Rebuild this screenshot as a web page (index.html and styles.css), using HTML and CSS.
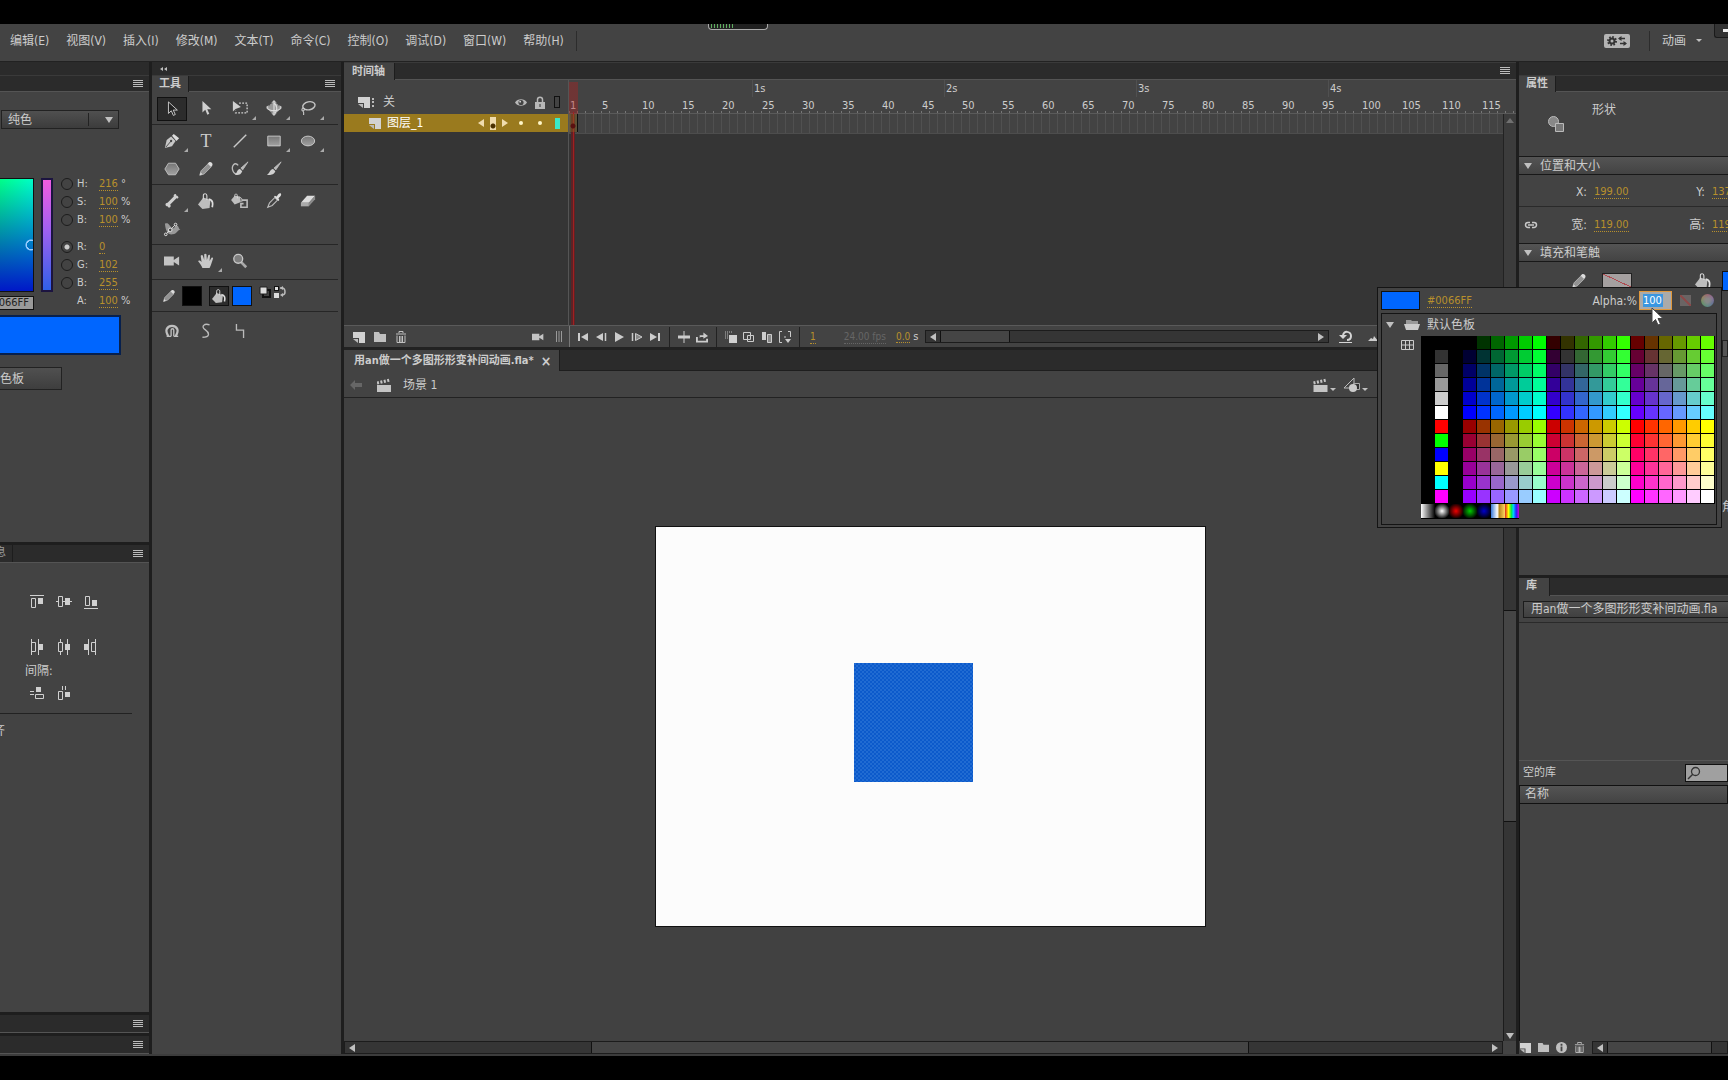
FILE: index.html
```html
<!DOCTYPE html>
<html lang="zh-CN">
<head>
<meta charset="utf-8">
<title>动画</title>
<link rel="stylesheet" href="styles.css">
</head>
<body>
<svg width="0" height="0" class="sprite" aria-hidden="true">
  <defs>
    <linearGradient id="g" x1="0" y1="0" x2="0" y2="1"><stop offset="0" stop-color="#767676"/><stop offset="1" stop-color="#a2a2a2"/></linearGradient>
  </defs>
  <symbol id="menu" viewBox="0 0 10 8"><path d="M0 .5h10M0 2.5h10M0 4.5h10M0 6.5h10" stroke="#bbb"/></symbol>
  <symbol id="select" viewBox="0 0 18 18"><path d="M5 1v13l3.200-3 2.300 5.200 2.200-1-2.300-5H15z" fill="#222" stroke="#d5d5d5"/></symbol>
  <symbol id="subselect" viewBox="0 0 18 18"><path d="M5 1v13l3.200-3 2.300 5.500 2.200-1-2.300-5H15z" fill="#cfcfcf"/></symbol>
  <symbol id="transform" viewBox="0 0 18 18"><path d="M1 1v12l3-3 6-2z" fill="#cfcfcf"/><path d="M8 3.500h9v11H4V12" fill="none" stroke="#cfcfcf" stroke-width="1.500" stroke-dasharray="2 1.500"/></symbol>
  <symbol id="rotate3d" viewBox="0 0 18 18"><circle cx="9" cy="9" r="6" fill="#999"/><path d="M9 1v15M1 9c3 4 13 4 16 0M9 3c4 3 4 9 1 12" fill="none" stroke="#ddd" stroke-width="1.300"/><path d="M9 0l3 3H6zM9 18l-3-3h6zM0 8l3-2v5zM18 8l-3-2v5z" fill="#ccc"/></symbol>
  <symbol id="lasso" viewBox="0 0 18 18"><ellipse cx="10" cy="6.500" rx="7" ry="4.500" fill="none" stroke="#c4c4c4" stroke-width="1.600" transform="rotate(-12 10 6.500)"/><path d="M4 9c-3 1-2 4 0 3s1-3-1-3M3 12c2 2 1 3 1 5" fill="none" stroke="#c4c4c4" stroke-width="1.300"/></symbol>
  <symbol id="pen" viewBox="0 0 18 18"><path d="M1 17l2-9 5-4 5 5-4 6z" fill="#c8c8c8"/><path d="M9 3l2-2 6 5-3 3z" fill="#ddd"/><path d="M2 16l6-7" stroke="#444"/><circle cx="8" cy="9" r="1.300" fill="#444"/></symbol>
  <symbol id="line" viewBox="0 0 18 18"><path d="M2 16L16 2" stroke="#c8c8c8" stroke-width="1.600"/></symbol>
  <symbol id="rect" viewBox="0 0 18 18"><path d="M2 3.500h14v11H2z" fill="url(#g)" stroke="#d0d0d0"/></symbol>
  <symbol id="oval" viewBox="0 0 18 18"><ellipse cx="9" cy="9" rx="7.500" ry="5.500" fill="url(#g)" stroke="#d0d0d0"/></symbol>
  <symbol id="poly" viewBox="0 0 18 18"><path d="M5 2.500h8l4 6.500-4 6.500H5L1 9z" fill="url(#g)" stroke="#c4c4c4"/></symbol>
  <symbol id="pencil" viewBox="0 0 18 18"><path d="M2 16l1.500-5 8-8 3.500 3.500-8 8z" fill="#929292" stroke="#b4b4b4"/><path d="M11 3c1-2 3-2.500 4.500-1s1 3.500-1 4.500z" fill="#ddd"/><path d="M2 16l1-3 2 2z" fill="#ddd"/></symbol>
  <symbol id="brush" viewBox="0 0 18 18"><path d="M17 1l-8 7 2 2z" fill="#bbb" stroke="#bbb"/><path d="M8 9l2.500 2.500C9 16 4 16 1 15.500c3-1 3-6 7-6.500z" fill="#d0d0d0"/></symbol>
  <symbol id="curvebrush" viewBox="0 0 20 18"><path d="M8 5c-4-5-8 1-6 6 1 3 3 4 5 3" fill="none" stroke="#bbb" stroke-width="1.500"/><path d="M19 1l-8 7 2 2z" fill="#bbb" stroke="#bbb"/><path d="M10 9l2.500 2.500C11 16 8 16 4 15.500c3-1 2-6 6-6.500z" fill="#d0d0d0"/></symbol>
  <symbol id="bone" viewBox="0 0 18 18"><path d="M11 4c-1-3 3-4 3-1 3 0 3 4 0 3L7 13c2 3-2 5-3 2-3 0-3-4 0-4z" fill="#cfcfcf"/></symbol>
  <symbol id="bucket" viewBox="0 0 18 18"><path d="M0 13l6-8 8 3-1 9-8 1z" fill="#bdbdbd"/><path d="M6 7V3c0-3 4-3 4 0v5" fill="none" stroke="#ddd" stroke-width="1.200"/><path d="M12 7c5 1 5 5 4 9" fill="none" stroke="#ddd" stroke-width="2"/></symbol>
  <symbol id="ink" viewBox="0 0 20 18"><path d="M0 8l4-5 6 1 1 6-7 3z" fill="#bdbdbd"/><path d="M4 4c0-4 3-4 3 0v2M10 5c3 1 2 3 2 5" fill="none" stroke="#ddd"/><path d="M12 8h6v8h-7v-4h3" fill="none" stroke="#bbb" stroke-width="1.800"/></symbol>
  <symbol id="dropper" viewBox="0 0 18 18"><path d="M2 16l2-5 6-6 3 3-6 6z" fill="none" stroke="#bbb" stroke-width="1.300"/><path d="M9 4l1-1 2 1 2-3c3-2 4 1 2 3l-2 2 1 2-1 1z" fill="#ddd"/></symbol>
  <symbol id="eraser" viewBox="0 0 18 18"><path d="M1 11l7-8h9l-7 8z" fill="#ddd"/><path d="M1 11h9v4H1z" fill="#aaa"/><path d="M10 11l7-8v4l-7 8z" fill="#8b8b8b"/></symbol>
  <symbol id="width" viewBox="0 0 20 18"><path d="M2 3c4-2 5 2 8 5 3 1 3-3 5-3 3 0 2 4 5 5-4-1-4 5-9 5-6 1-8-4-9-12z" fill="#999"/><path d="M3 15L14 4" stroke="#eee"/><circle cx="3" cy="15" r="1.500" fill="#444" stroke="#eee"/><circle cx="8" cy="10" r="2" fill="#444" stroke="#eee"/><circle cx="14" cy="4" r="1.500" fill="#444" stroke="#eee"/></symbol>
  <symbol id="camera" viewBox="0 0 18 18"><path d="M0 4h11v10H0zM11 8l6-4v10l-6-4z" fill="#c4c4c4"/></symbol>
  <symbol id="hand" viewBox="0 0 18 18"><path d="M5 17C4 14 2 12 0 9c1-1 2-1 4 1L3 3c1-1 2-1 2.500 0L7 8V1.500C7.500.500 9 .500 9.500 1.500L10 8l1.500-5.500c.5-1 2-.8 2 .5L13 9l2-3.500c1-1 2-.5 2 .5-1 3-2 7-4 11z" fill="#c8c8c8"/></symbol>
  <symbol id="zoom" viewBox="0 0 18 18"><path d="M10 10l6 6" stroke="#aaa" stroke-width="3"/><circle cx="7" cy="6.500" r="5" fill="#7e7e7e" stroke="#c8c8c8" stroke-width="1.500"/></symbol>
  <symbol id="magnet" viewBox="0 0 18 18"><path d="M5 15c-2-3-3-5-2-8 2-5 10-5 12 0 1 3 0 5-2 8" fill="none" stroke="#c0c0c0" stroke-width="2.500"/><path d="M8 15V8c0-2 3-2 3 0v7M3 15h5M11 15h5" fill="none" stroke="#c0c0c0" stroke-width="1.500"/></symbol>
  <symbol id="smooth" viewBox="0 0 18 18"><path d="M13 2C7 0 3 4 8 7.500S14 16 5 16" fill="none" stroke="#bbb" stroke-width="1.500"/></symbol>
  <symbol id="straight" viewBox="0 0 18 18"><path d="M5 1v7h8v9" fill="none" stroke="#bbb" stroke-width="1.500"/></symbol>
  <symbol id="bw" viewBox="0 0 12 12"><path d="M4 4h7v7H4z" fill="none" stroke="#111" stroke-width="2"/><path d="M1 1h7v7H1z" fill="#ddd" stroke="#222"/></symbol>
  <symbol id="swap" viewBox="0 0 12 12"><path d="M0 0h5v5H0z" fill="#111"/><path d="M1 1h3v3H1zM0 7h5v5H0z" fill="#ddd"/><path d="M6 2h2c3 0 3 2 3 4s-1 3-3 3" fill="none" stroke="#bbb" stroke-width="1.500"/><path d="M6 2l3-2v4zM6 9l3-2v4z" fill="#bbb"/></symbol>
  <symbol id="layer" viewBox="0 0 12 12"><path d="M0 1h12v11H6V7H0z" fill="#d2d2d2"/><path d="M0 8h5v4z" fill="#bbb"/></symbol>
  <symbol id="eye" viewBox="0 0 14 10"><path d="M0 5c3-5 11-5 14 0-3 5-11 5-14 0z" fill="#b8b8b8"/><circle cx="7" cy="5" r="3" fill="#444"/><circle cx="6" cy="4" r="1" fill="#ddd"/></symbol>
  <symbol id="lock" viewBox="0 0 10 13"><path d="M2.500 6V3.500c0-3 5-3 5 0V6" fill="none" stroke="#b8b8b8" stroke-width="1.500"/><path d="M0 6h10v7H0z" fill="#b8b8b8"/><path d="M4.500 8h1v3h-1z" fill="#333"/></symbol>
  <symbol id="folder" viewBox="0 0 12 12"><path d="M0 1h5l1 2h6v8H0z" fill="#c0c0c0"/></symbol>
  <symbol id="trash" viewBox="0 0 12 12"><path d="M1 3h10M4 2V.5h4V2M2 4.500v7h8v-7M4.500 5v6M6 5v6M7.500 5v6" fill="none" stroke="#c0c0c0"/></symbol>
  <symbol id="grip" viewBox="0 0 6 12"><path d="M.5 0v11M3 0v11M5.500 0v11" stroke="#999"/></symbol>
  <symbol id="first" viewBox="0 0 12 10"><path d="M2 1v8" stroke="#ccc" stroke-width="2"/><path d="M11 1v8L4 5z" fill="#ccc"/></symbol>
  <symbol id="prev" viewBox="0 0 12 10"><path d="M10.500 1v8" stroke="#ccc" stroke-width="1.500"/><path d="M8 1v8L1 5z" fill="#ccc"/></symbol>
  <symbol id="play" viewBox="0 0 12 10"><path d="M2 0v10l9-5z" fill="#ccc"/></symbol>
  <symbol id="next" viewBox="0 0 12 10"><path d="M1.500 1v8" stroke="#ccc" stroke-width="1.500"/><path d="M4.500 1.500v7L11 5z" fill="#888" stroke="#ccc"/></symbol>
  <symbol id="last" viewBox="0 0 12 10"><path d="M10 1v8" stroke="#ccc" stroke-width="2"/><path d="M1 1v8l7-4z" fill="#ccc"/></symbol>
  <symbol id="center" viewBox="0 0 12 12"><path d="M6 0v12" stroke="#ccc"/><path d="M0 6h12" stroke="#ccc" stroke-width="3"/></symbol>
  <symbol id="loop" viewBox="0 0 13 12"><path d="M1 6v5h11V8" fill="none" stroke="#ccc" stroke-width="2"/><path d="M4 7V4h4V1l5 4-5 3V6H5z" fill="#ccc"/></symbol>
  <symbol id="onion" viewBox="0 0 12 12"><path d="M4 4h8v8H4z" fill="#d0d0d0"/><path d="M0 1h8M0 3h4M0 5h4M0 7h3" stroke="#bbb" stroke-dasharray="1 1"/></symbol>
  <symbol id="outline" viewBox="0 0 12 12"><path d="M.5 1.500h7v7h-7zM4.500 4.500h6v6h-6z" fill="none" stroke="#ccc"/></symbol>
  <symbol id="multi" viewBox="0 0 12 12"><path d="M1 1h4v8H1z" fill="#ccc"/><path d="M6.500 3.500h4v8h-4z" fill="#888" stroke="#ccc"/></symbol>
  <symbol id="marker" viewBox="0 0 12 12"><path d="M3 .5H.5v11H3M9 .5h2.500V6M5 6h2" fill="none" stroke="#ccc"/><path d="M6 8h6l-3 4z" fill="#ccc"/></symbol>
  <symbol id="undo" viewBox="0 0 14 13"><path d="M4 6c0-6 8-5 8 0 0 2-1 4-4 4" fill="none" stroke="#d5d5d5" stroke-width="2"/><path d="M0 5h8L4 9z" fill="#d5d5d5"/><path d="M0 12.500h13" stroke="#d5d5d5"/></symbol>
  <symbol id="hills" viewBox="0 0 10 5"><path d="M0 5l3-3 2 1 1-3 4 5z" fill="#ccc"/></symbol>
  <symbol id="clap" viewBox="0 0 14 14"><path d="M0 7h14v7H0z" fill="#c4c4c4"/><path d="M0 5l13-3" stroke="#c4c4c4" stroke-width="3" stroke-dasharray="2 1.500"/></symbol>
  <symbol id="symbols" viewBox="0 0 16 14"><path d="M0 10L10 0v10z" fill="#444" stroke="#bbb"/><path d="M9.500 5.500h6v6h-6z" fill="#333" stroke="#aaa"/><circle cx="9" cy="10" r="4" fill="#ccc"/></symbol>
  <symbol id="back" viewBox="0 0 12 10"><path d="M0 5l5-5v3h7v4H5v3z" fill="#666"/></symbol>
  <symbol id="shapes" viewBox="0 0 16 16"><circle cx="5.500" cy="5.500" r="5" fill="#888" stroke="#bbb"/><path d="M7.500 7.500h8v8h-8z" fill="#777" stroke="#bbb"/></symbol>
  <symbol id="link" viewBox="0 0 14 8"><path d="M6 1.500H4a2.500 2.500 0 000 5h2M8 1.500h2a2.500 2.500 0 010 5H8M4 4h6" fill="none" stroke="#c8c8c8" stroke-width="1.500"/></symbol>
  <symbol id="info" viewBox="0 0 12 12"><circle cx="6" cy="6" r="6" fill="#c0c0c0"/><path d="M6 2v2M6 5v5" stroke="#444" stroke-width="2"/></symbol>
  <symbol id="search" viewBox="0 0 14 14"><path d="M1 13l5-5" stroke="#333" stroke-width="1.500"/><circle cx="8.500" cy="5.500" r="4" fill="none" stroke="#333" stroke-width="1.300"/></symbol>
  <symbol id="openfolder" viewBox="0 0 16 12"><path d="M2 5V1h5l1 1h6v3" fill="#999"/><path d="M0 5h16l-2 6H2z" fill="#ccc"/></symbol>
  <symbol id="grid" viewBox="0 0 13 10"><path d="M.5.5h12v9H.5zM.5 5h12M4.500.5v9M8.500.5v9" fill="none" stroke="#ccc"/></symbol>
  <symbol id="a1" viewBox="0 0 16 16"><path d="M1 1.500h14" stroke="#d0d0d0"/><path d="M2.500 4.500h4v9h-4z" fill="none" stroke="#d0d0d0"/><path d="M9 4h5v6H9z" fill="#d0d0d0"/></symbol>
  <symbol id="a2" viewBox="0 0 16 16"><path d="M0 7.500h16" stroke="#d0d0d0"/><path d="M2.500 2.500h4v10h-4z" fill="#444" stroke="#d0d0d0"/><path d="M9 4h5v7H9z" fill="#d0d0d0"/></symbol>
  <symbol id="a3" viewBox="0 0 16 16"><path d="M1 14.500h14" stroke="#d0d0d0"/><path d="M2.500 2.500h4v9h-4z" fill="none" stroke="#d0d0d0"/><path d="M9 6h5v6H9z" fill="#d0d0d0"/></symbol>
  <symbol id="b1" viewBox="0 0 16 16"><path d="M2.500 0v16M9.500 0v16M3 3.500h3.500v9H3" fill="none" stroke="#d0d0d0"/><path d="M9 5h5v6H9z" fill="#d0d0d0"/></symbol>
  <symbol id="b2" viewBox="0 0 16 16"><path d="M4.500 0v16M11.500 0v16" stroke="#d0d0d0"/><path d="M2.500 3.500h4v9h-4z" fill="#444" stroke="#d0d0d0"/><path d="M9 5h5v6H9z" fill="#d0d0d0"/></symbol>
  <symbol id="b3" viewBox="0 0 16 16"><path d="M5.500 0v16M12.500 0v16M12 3.500H8.500v9H12" fill="none" stroke="#d0d0d0"/><path d="M1 5h5v6H1z" fill="#d0d0d0"/></symbol>
  <symbol id="c1" viewBox="0 0 16 16"><path d="M1 6.500h4M1 9.500h4M6.500 9.500h8v4h-8z" fill="none" stroke="#d0d0d0"/><path d="M7 2h5v5H7z" fill="#d0d0d0"/></symbol>
  <symbol id="c2" viewBox="0 0 16 16"><path d="M6.500 1v4M9.500 1v4M2.500 6.500h4v8h-4z" fill="none" stroke="#d0d0d0"/><path d="M9 7h5v5H9z" fill="#d0d0d0"/></symbol>
  <symbol id="gear" viewBox="0 0 26 14"><rect width="26" height="14" rx="2" fill="#b4b4b4"/><circle cx="8" cy="7" r="4" fill="none" stroke="#333" stroke-width="2" stroke-dasharray="1.600 1.500"/><circle cx="8" cy="7" r="2.500" fill="none" stroke="#333" stroke-width="2"/><path d="M15 4.500h6M16 9.500h6" stroke="#333" stroke-width="1.500"/><path d="M14 4.500L17.500 2v5zM23 9.500L19.500 7v5z" fill="#333"/></symbol>
  <symbol id="cursor" viewBox="0 0 13 20"><path d="M1 1v15l3.500-3.500L7 18l2.500-1-2.500-5.500h5z" fill="#fff" stroke="#444"/></symbol>
</svg>

<header class="menubar">
  <nav class="menus">
    <button>编辑(E)</button><button>视图(V)</button><button>插入(I)</button><button>修改(M)</button><button>文本(T)</button><button>命令(C)</button><button>控制(O)</button><button>调试(D)</button><button>窗口(W)</button><button>帮助(H)</button>
  </nav>
  <div class="battery"></div>
  <button class="sync" aria-label="同步设置"><svg width="26" height="14"><use href="#gear"/></svg></button>
  <button class="workspace">动画 <i class="tri down small"></i></button>
  <button class="minimize" aria-label="最小化"></button>
</header>

<main class="app">
  <aside class="mixer">
    <div class="strip"></div>
    <div class="tabbar"><svg class="more" width="10" height="8"><use href="#menu"/></svg></div>
    <section class="color">
      <button class="combo">纯色<i class="tri down"></i></button>
      <div class="picker">
        <div class="field-col">
          <div class="spectrum"></div>
          <input class="hex" aria-label="十六进制" value="0066FF">
        </div>
        <div class="hue"></div>
        <div class="values">
          <label><input type="radio" name="ch">H:</label><span><a href="#">216</a> °</span>
          <label><input type="radio" name="ch">S:</label><span><a href="#">100</a> %</span>
          <label><input type="radio" name="ch">B:</label><span><a href="#">100</a> %</span>
          <hr>
          <label><input type="radio" name="ch" checked>R:</label><span><a href="#">0</a></span>
          <label><input type="radio" name="ch">G:</label><span><a href="#">102</a></span>
          <label><input type="radio" name="ch">B:</label><span><a href="#">255</a></span>
          <label class="alpha">A:</label><span><a href="#">100</a> %</span>
        </div>
      </div>
      <div class="preview"></div>
      <button class="add">色板</button>
    </section>
    <div class="tabbar gap"><span class="cut">息</span><svg class="more" width="10" height="8"><use href="#menu"/></svg></div>
    <section class="align">
      <div class="icons"><svg><use href="#a1"/></svg><svg><use href="#a2"/></svg><svg><use href="#a3"/></svg></div>
      <div class="icons second"><svg><use href="#b1"/></svg><svg><use href="#b2"/></svg><svg><use href="#b3"/></svg></div>
      <p>间隔:</p>
      <div class="icons"><svg><use href="#c1"/></svg><svg><use href="#c2"/></svg></div>
      <hr>
      <span class="tail">齐</span>
    </section>
    <div class="tabbar gap"><svg class="more" width="10" height="8"><use href="#menu"/></svg></div>
    <div class="tabbar gap"><svg class="more" width="10" height="8"><use href="#menu"/></svg></div>
  </aside>

  <aside class="tools">
    <div class="strip"><span class="collapse"><i class="tri left tiny"></i><i class="tri left tiny"></i></span></div>
    <div class="tabbar"><b class="tab">工具</b><svg class="more" width="10" height="8"><use href="#menu"/></svg></div>
    <div class="group">
      <button class="on" aria-label="选择"><svg><use href="#select"/></svg></button><button aria-label="部分选取"><svg><use href="#subselect"/></svg></button><button class="sub" aria-label="任意变形"><svg><use href="#transform"/></svg></button><button class="sub" aria-label="3D 旋转"><svg><use href="#rotate3d"/></svg></button><button class="sub" aria-label="套索"><svg><use href="#lasso"/></svg></button>
    </div>
    <div class="group">
      <button class="sub" aria-label="钢笔"><svg><use href="#pen"/></svg></button><button class="type">T</button><button aria-label="线条"><svg><use href="#line"/></svg></button><button class="sub" aria-label="矩形"><svg><use href="#rect"/></svg></button><button class="sub" aria-label="椭圆"><svg><use href="#oval"/></svg></button>
      <button aria-label="多角星形"><svg><use href="#poly"/></svg></button><button aria-label="铅笔"><svg><use href="#pencil"/></svg></button><button aria-label="艺术画笔"><svg><use href="#curvebrush"/></svg></button><button aria-label="画笔"><svg><use href="#brush"/></svg></button>
    </div>
    <div class="group">
      <button class="sub" aria-label="骨骼"><svg><use href="#bone"/></svg></button><button aria-label="颜料桶"><svg><use href="#bucket"/></svg></button><button aria-label="墨水瓶"><svg><use href="#ink"/></svg></button><button aria-label="滴管"><svg><use href="#dropper"/></svg></button><button aria-label="橡皮擦"><svg><use href="#eraser"/></svg></button>
      <button aria-label="宽度"><svg><use href="#width"/></svg></button>
    </div>
    <div class="group view">
      <button aria-label="摄像头"><svg><use href="#camera"/></svg></button><button class="sub" aria-label="手形"><svg><use href="#hand"/></svg></button><button aria-label="缩放"><svg><use href="#zoom"/></svg></button>
    </div>
    <div class="paints">
      <svg width="14" height="14"><use href="#pencil"/></svg>
      <button class="chip black" aria-label="笔触"></button>
      <button class="chip fillmode" aria-label="填充工具"><svg width="14" height="14"><use href="#bucket"/></svg></button>
      <button class="chip blue" aria-label="填充"></button>
      <svg width="12" height="12"><use href="#bw"/></svg>
      <svg width="12" height="12"><use href="#swap"/></svg>
    </div>
    <div class="group last">
      <button aria-label="贴紧"><svg><use href="#magnet"/></svg></button><button aria-label="平滑"><svg><use href="#smooth"/></svg></button><button aria-label="伸直"><svg><use href="#straight"/></svg></button>
    </div>
  </aside>

  <section class="center">
    <div class="tabbar time-tabs"><b class="tab">时间轴</b><svg class="more" width="10" height="8"><use href="#menu"/></svg></div>
    <div class="timeline">
      <div class="layers">
        <div class="layer-head">
          <svg width="12" height="12"><use href="#layer"/></svg><i class="dots"></i><span>关</span>
          <div class="cells"><i class="c19"><svg width="12" height="9"><use href="#eye"/></svg></i><i class="c19"><svg width="10" height="13"><use href="#lock"/></svg></i><i class="c16"><i class="box"></i></i></div>
        </div>
        <div class="layer">
          <svg width="12" height="12"><use href="#layer"/></svg><span>图层_1</span>
          <div class="cells"><i class="c12"><i class="tri left"></i></i><i class="c12"><i class="key"></i></i><i class="c12"><i class="tri right"></i></i><i class="c19"><i class="dot"></i></i><i class="c19"><i class="dot"></i></i><i class="c16"><i class="teal"></i></i></div>
        </div>
      </div>
      <div class="frames">
        <div class="ruler"><div class="seconds" id="seconds"></div><div class="numbers" id="numbers"></div></div>
        <div class="row"></div>
        <div class="playhead"></div>
        <div class="tscroll"><i class="tri up dim"></i></div>
      </div>
    </div>
    <div class="controls">
      <div class="layer-tools"><button><svg><use href="#layer"/></svg></button><button><svg><use href="#folder"/></svg></button><button><svg><use href="#trash"/></svg></button><button class="push"><svg><use href="#camera"/></svg></button><button><svg><use href="#grip"/></svg></button></div>
      <div class="set"><button><svg><use href="#first"/></svg></button><button><svg><use href="#prev"/></svg></button><button><svg><use href="#play"/></svg></button><button><svg><use href="#next"/></svg></button><button><svg><use href="#last"/></svg></button></div>
      <div class="set"><button><svg><use href="#center"/></svg></button><button><svg><use href="#loop"/></svg></button></div>
      <div class="set"><button><svg><use href="#onion"/></svg></button><button><svg><use href="#outline"/></svg></button><button><svg><use href="#multi"/></svg></button><button><svg><use href="#marker"/></svg></button></div>
      <div class="stats"><a href="#">1</a><a href="#" class="fps">24.00 fps</a><span><a href="#">0.0</a> s</span></div>
      <div class="hbar"><i class="tri left"></i><div class="thumb"></div><i class="tri right"></i></div>
      <svg class="undo" width="14" height="13"><use href="#undo"/></svg>
      <svg class="hills" width="10" height="5"><use href="#hills"/></svg>
    </div>
    <div class="doc-tabs"><div class="doc"><b>用an做一个多图形形变补间动画.fla*</b><button aria-label="关闭">×</button></div></div>
    <div class="scene">
      <svg width="12" height="10"><use href="#back"/></svg><svg width="14" height="14"><use href="#clap"/></svg><span>场景 1</span>
      <div class="scene-tools"><svg width="15" height="14"><use href="#clap"/></svg><i class="tri down small"></i><svg width="16" height="14"><use href="#symbols"/></svg><i class="tri down small"></i></div>
    </div>
    <div class="work">
      <div class="pasteboard"><div class="stage"><div class="shape"></div></div></div>
      <div class="vbar"><div class="thumb"></div><i class="tri down"></i></div>
    </div>
    <div class="bottombar"><div class="hbar wide"><i class="tri left"></i><div class="thumb"></div><i class="tri right"></i></div><div class="corner"></div></div>
  </section>

  <aside class="props">
    <div class="strip"></div>
    <div class="tabbar"><b class="tab">属性</b></div>
    <div class="kind"><svg width="16" height="16"><use href="#shapes"/></svg><span>形状</span></div>
    <h2><i class="tri down"></i>位置和大小</h2>
    <div class="pair"><span></span><label>X:</label><a href="#">199.00</a><label>Y:</label><a href="#">137.00</a></div>
    <div class="pair size"><svg width="14" height="8"><use href="#link"/></svg><label>宽:</label><a href="#">119.00</a><label>高:</label><a href="#">119.00</a></div>
    <h2><i class="tri down"></i>填充和笔触</h2>
    <div class="fillrow"><svg width="16" height="16"><use href="#pencil"/></svg><i class="none"></i><svg width="16" height="16"><use href="#bucket"/></svg><i class="chip blue"></i></div>
    <div class="rest"><i class="sliver"></i><span>角</span></div>
    <div class="tabbar gap lib"><b class="tab">库</b></div>
    <div class="libselect"><button>用an做一个多图形形变补间动画.fla</button></div>
    <div class="libpreview"></div>
    <div class="libsearch"><span>空的库</span><label><svg width="14" height="14"><use href="#search"/></svg><input aria-label="搜索"></label></div>
    <div class="libhead">名称</div>
    <div class="liblist"></div>
    <div class="libfoot"><svg><use href="#layer"/></svg><svg><use href="#folder"/></svg><svg><use href="#info"/></svg><svg><use href="#trash"/></svg><div class="hbar"><i class="tri left"></i><div class="thumb"></div></div></div>
  </aside>
</main>

<div class="popup">
  <div class="popup-head"><i class="chip blue"></i><a href="#">#0066FF</a><label for="alpha">Alpha:%</label><div class="alphabox"><input id="alpha" value="100"></div><i class="nocolor"></i><i class="wheel"></i></div>
  <div class="popup-body">
    <div class="set-name"><i class="tri down"></i><svg width="16" height="12"><use href="#openfolder"/></svg><span>默认色板</span></div>
    <div class="set-body">
      <svg width="13" height="10"><use href="#grid"/></svg>
      <div><div class="swatches" id="swatches"></div><div class="gradients"><i></i><i></i><i></i><i></i><i></i><i></i><i></i></div></div>
    </div>
  </div>
  <svg class="cursor" width="13" height="20"><use href="#cursor"/></svg>
</div>
<div class="floor"></div>
<script src="app.js"></script>
</body>
</html>
```
FILE: styles.css
```css
* { box-sizing: border-box; }
body {
  margin: 0; padding-top: 24px; min-height: 100vh; background: #000; color: #ccc;
  display: flex; flex-direction: column; position: relative; overflow: hidden;
  font: 12px/16px "DejaVu Sans Condensed", "Noto Sans CJK SC", sans-serif;
}
.sprite { position: absolute; }
button, input { font: inherit; color: inherit; background: none; border: 0; padding: 0; margin: 0; }
a { color: #b8902c; text-decoration: none; border-bottom: 1px dotted #b8902c; font-size: 11px; line-height: 13px; }
svg { flex: none; display: block; }
h2, p { margin: 0; font-size: inherit; font-weight: 400; }
hr { margin: 0; border: 0; }

.tri { width: 0; height: 0; border: 4px solid transparent; flex: none; display: inline-block; }
.tri.down { border-top: 6px solid #c0c0c0; border-bottom: 0; }
.tri.up { border-bottom: 5px solid #c0c0c0; border-top: 0; }
.tri.left { border-right: 6px solid #c0c0c0; border-left: 0; }
.tri.right { border-left: 6px solid #c0c0c0; border-right: 0; }
.tri.small { border-width: 3px 3px 0; }
.tri.tiny { border-width: 2px 3px 2px 0; }
.tri.dim { border-bottom-color: #707070; }

.menubar { height: 38px; flex: none; background: #434343; display: flex; align-items: center; border-bottom: 1px solid #222; position: relative; padding-bottom: 4px; }
.menus { display: flex; gap: 17px; padding-left: 10px; padding-right: 12px; height: 20px; border-right: 1px solid #2c2c2c; }
.menus button { line-height: 20px; white-space: nowrap; }
.battery { position: absolute; left: 41%; top: 0; width: 60px; height: 6px; border: 1px solid #aaa; border-top: 0; border-radius: 0 0 4px 4px; background: repeating-linear-gradient(90deg, #5fae5f 0 1px, #202020 1px 3px) 2px 0 / 22px 4px no-repeat #202020; }
.sync { margin-left: auto; }
.workspace { margin-left: 19px; padding-left: 12px; height: 20px; border-left: 1px solid #2c2c2c; display: flex; align-items: center; gap: 10px; }
.minimize { align-self: flex-start; width: 14px; height: 14px; margin-left: 12px; background: #333; border: 1px solid #1a1a1a; border-top: 0; border-right: 0; border-radius: 0 0 0 3px; }
.minimize::after { content: ""; display: block; height: 3px; margin-left: 8px; background: #eee; }

.app { flex: 1; display: flex; background: #1e1e1e; min-height: 0; gap: 3px; border-bottom: 2px solid #3c3c3c; }
.app > * { background: #434343; display: flex; flex-direction: column; min-width: 0; overflow: hidden; }
.strip { height: 13px; flex: none; background: #2b2b2b; }
.tabbar { height: 17px; flex: none; display: flex; align-items: stretch; background: #2b2b2b; border-top: 1px solid #3a3a3a; border-bottom: 1px solid #545454; font-size: 11px; }
.tabbar.gap { height: 21px; border-top: 3px solid #1e1e1e; }
.tab { background: #434343; padding: 0 8px; line-height: 16px; margin-bottom: -1px; border-right: 1px solid #1d1d1d; }
.more { margin: auto 6px auto auto; }

.mixer { width: 149px; flex: none; }
.color { height: 450px; flex: none; padding-top: 18px; }
.combo { width: 118px; height: 19px; margin-left: 1px; padding: 0 5px 0 6px; border: 1px solid #222; background: linear-gradient(#222, #222) 86px 2px / 1px 13px no-repeat, linear-gradient(#505050, #3c3c3c); display: flex; align-items: center; justify-content: space-between; }
.picker { display: flex; margin-top: 46px; }
.field-col { width: 34px; padding-top: 3px; display: flex; flex-direction: column; gap: 4px; }
.spectrum { height: 114px; border: 1px solid #111; border-left: 0; background: radial-gradient(circle at 31px 66px, transparent 4px, #9cf 4px 5px, transparent 6px), linear-gradient(transparent, #0018c8), linear-gradient(90deg, #0f8, #00ffc8); }
.hex { height: 14px; width: 46px; margin-left: -12px; border: 1px solid #111; border-left: 0; background: #9a9a9a; color: #222; font-size: 11px; text-align: right; padding-right: 4px; }
.hue { margin: 3px 8px 0 7px; width: 12px; height: 114px; border: 2px solid #1c1440; background: linear-gradient(#f05ce0, #a060f0 45%, #3060e8); }
.values { display: grid; grid-template: 18px 18px 18px 9px / 38px auto; grid-auto-rows: 18px; align-items: center; font-size: 11px; }
.values hr { grid-column: 1 / 3; }
.values label { display: flex; align-items: center; gap: 4px; }
.values .alpha { padding-left: 16px; }
.values input { appearance: none; width: 12px; height: 12px; border: 1px solid #1c1c1c; border-radius: 50%; }
.values input:checked { background: radial-gradient(circle, #ccc 2px, transparent 3px); }
.preview { width: 121px; height: 40px; margin-top: 5px; border: 2px solid #07204d; border-left: 0; background: #0066ff; }
.add { width: 62px; height: 23px; margin-top: 12px; border: 1px solid #222; border-left: 0; background: linear-gradient(#505050, #3e3e3e); text-align: left; }
.cut { width: 13px; border-right: 1px solid #1d1d1d; overflow: hidden; display: flex; justify-content: flex-end; padding-right: 6px; color: #999; }
.align { flex: 1; padding: 31px 17px 0 0; }
.icons { display: flex; gap: 11px; padding-left: 29px; }
.icons svg { width: 16px; height: 16px; }
.icons.second { margin: 29px 0 7px; }
.align p { padding-left: 25px; line-height: 18px; margin-bottom: 5px; }
.align hr { border-top: 1px solid #222; margin: 12px 0 9px; }
.tail { display: flex; width: 5px; justify-content: flex-end; overflow: hidden; }

.tools { width: 189px; flex: none; }
.tools .tab { padding: 0 7px; }
.collapse { display: flex; gap: 1px; padding: 5px 0 0 8px; }
.group { display: flex; flex-wrap: wrap; align-content: center; padding: 1px 13px 1px 3px; margin: 0 3px 0 0; border-bottom: 1px solid #262626; }
.group button { width: 34px; height: 30px; display: flex; align-items: center; justify-content: center; position: relative; }
.group svg { width: 18px; height: 16px; }
.group button.on { width: 30px; height: 24px; margin: 4px 2px 2px; background: #2c2c2c; border: 1px solid #111; }
.group button.sub::after { content: ""; position: absolute; right: 1px; bottom: 3px; border: 4px solid transparent; border-width: 0 0 4px 4px; border-bottom-color: #aaa; }
.group + .group button { height: 28px; }
.group + .group { padding-top: 2px; }
.group .type { font: 18px/20px "Liberation Serif", serif; }
.group.view { padding-bottom: 4px; }
.paints { height: 32px; flex: none; display: flex; align-items: center; padding-left: 10px; margin-right: 3px; border-bottom: 1px solid #262626; }
.chip { width: 20px; height: 20px; border: 1px solid #111; display: flex; align-items: center; justify-content: center; }
.black { background: #000; margin: 0 7px 0 6px; }
.fillmode { background: #2c2c2c; margin-right: 3px; }
.blue { background: #0066ff; }
.paints .blue { margin-right: 7px; }
.paints .chip ~ svg { margin: -8px 3px 0 0; }
.group.last { border: 0; padding-top: 4px; }

.center { flex: 1; }
.time-tabs { height: 18px; }
.time-tabs .tab { line-height: 18px; padding: 0 9px 0 8px; }
.timeline { height: 245px; flex: none; display: flex; background: #353535; }
.layers { width: 225px; flex: none; border-right: 1px solid #555; }
.layer-head, .layer { display: flex; align-items: center; padding: 0 3px 0 14px; font-style: normal; }
.layer-head { height: 34px; background: #434343; padding-top: 10px; }
.dots { height: 9px; border-left: 2px dotted #bbb; margin: 0 9px 0 2px; }
.layer { height: 18px; background: #9a7a1e; color: #fff; padding-left: 25px; }
.layer span { margin-left: 6px; }
.cells { margin-left: auto; display: flex; align-items: center; }
.cells > i { display: flex; align-items: center; justify-content: center; }
.c12 { width: 12px; }
.c19 { width: 19px; }
.c16 { width: 16px; }
.cells .tri.left { border-right-color: #f0dcae; }
.cells .tri.right { border-left-color: #f0dcae; }
.box { width: 6px; height: 12px; border: 1px solid #111; }
.key { width: 6px; height: 13px; background: radial-gradient(circle at 3px 9px, #4a3000 2px, transparent 3px), #f0dcae; }
.dot { width: 4px; height: 4px; border-radius: 50%; background: #fff6c8; }
.teal { width: 5px; height: 11px; background: #3ae8c8; }
.frames { flex: 1; position: relative; overflow: hidden; min-width: 0; }
.ruler { height: 34px; background: repeating-linear-gradient(90deg, #777 0 1px, transparent 1px 8px) 0 31px / 100% 3px no-repeat #434343; border-bottom: 1px solid #5a5a5a; overflow: hidden; font-size: 11px; }
.seconds { display: flex; padding-left: 183px; height: 17px; line-height: 18px; }
.seconds span { width: 192px; flex: none; padding-left: 1px; border-left: 1px solid #505050; }
.numbers { display: flex; line-height: 17px; }
.numbers span { width: 40px; flex: none; }
.numbers span:first-child { width: 33px; padding-left: 1px; }
.row { height: 20px; margin-right: 13px; background: repeating-linear-gradient(90deg, #505050 0 1px, #434343 1px 8px); border-bottom: 1px solid #4d4d4d; }
.playhead { position: absolute; left: 0; top: 2px; width: 9px; bottom: 0; background: linear-gradient(#a02020, #a02020) 4px 30px / 1px 100% no-repeat, linear-gradient(#b0202066, #b0202066) 0 0 / 9px 32px no-repeat, linear-gradient(#5c2226, #5c2226) 2px 32px / 4px 100% no-repeat; }
.playhead::after { content: ""; position: absolute; left: 0; top: 32px; width: 8px; height: 18px; border-right: 1px solid #111; background: radial-gradient(circle at 4px 12px, #5a1010 2px, transparent 3px), #8a682266; }
.tscroll { position: absolute; right: 0; top: 34px; bottom: 0; width: 13px; background: #3c3c3c; border-left: 1px solid #222; display: flex; justify-content: center; padding-top: 4px; }

.controls { height: 25px; flex: none; display: flex; align-items: center; border-top: 1px solid #5a5a5a; border-bottom: 3px solid #222; }
.controls button { width: 18px; height: 20px; display: flex; align-items: center; justify-content: center; }
.controls button svg { width: 12px; height: 12px; }
.layer-tools { width: 226px; flex: none; align-self: stretch; display: flex; align-items: center; gap: 3px; padding: 0 1px 0 6px; border-right: 1px solid #777; }
.push { margin-left: auto; }
.set { display: flex; padding: 0 5px 0 4px; border-right: 1px solid #222; height: 20px; }
.set + .set { padding-left: 5px; }
.stats { display: flex; align-items: center; flex: none; width: 125px; padding-left: 10px; font-size: 11px; }
.stats a { font-size: 10px; white-space: nowrap; }
.stats span { white-space: nowrap; }
.stats .fps { color: #666; border-color: #666; margin: 0 10px 0 28px; }
.hbar { height: 13px; flex: 0 1 404px; border: 1px solid #1c1c1c; background: #353535; display: flex; align-items: center; padding: 0 4px; }
.hbar .thumb { width: 70px; align-self: stretch; background: #454545; border: 1px solid #111; border-width: 0 1px; margin: 0 auto 0 4px; }
.undo { margin: 0 15px 0 10px; }
.hills { margin-top: 4px; }

.doc-tabs { height: 21px; flex: none; display: flex; background: #2b2b2b; border-bottom: 1px solid #1e1e1e; }
.doc { background: #434343; display: flex; align-items: center; gap: 7px; padding: 1px 8px 0 10px; border-right: 1px solid #1d1d1d; font-size: 11px; margin-bottom: -1px; white-space: nowrap; }
.doc button { font-size: 14px; font-weight: 700; line-height: 16px; }
.scene { height: 27px; flex: none; display: flex; align-items: center; gap: 15px; padding: 1px 142px 0 6px; border-bottom: 1px solid #222; }
.scene span { margin-left: -3px; }
.scene-tools { margin-left: auto; display: flex; align-items: center; gap: 2px; }
.scene-tools .tri { margin: 10px 6px 0 0; }
.work { flex: 1; display: flex; min-height: 0; }
.pasteboard { flex: 1; position: relative; overflow: hidden; background: #414141; }
.stage { position: absolute; left: 311px; top: 128px; width: 551px; height: 401px; background: #fcfcfc; border: 1px solid #111; }
.shape { position: absolute; left: 198px; top: 136px; width: 119px; height: 119px; background: linear-gradient(#5c9ae8, #5c9ae8) 0 0 / 1px 1px no-repeat, conic-gradient(#4a8ce4 25%, transparent 0) 0 0 / 4px 4px, #0c5acb; background: radial-gradient(circle at 1px 1px, #5494e6 0, #0c5acb00 1px) 0 0 / 4px 4px, radial-gradient(circle at 3px 3px, #5494e6 0, #0c5acb00 1px) 0 0 / 4px 4px, #0c5acb; }
.vbar { width: 13px; border-left: 1px solid #1c1c1c; background: #353535; display: flex; flex-direction: column; align-items: center; }
.vbar .thumb { width: 12px; height: 33%; margin: 212px 0 auto; background: #454545; border: 1px solid #111; border-width: 1px 0; }
.vbar .tri { margin-bottom: 2px; }
.bottombar { display: flex; height: 13px; flex: none; }
.hbar.wide { flex: 1; }
.wide .thumb { width: 658px; margin-left: 236px; }
.corner { width: 13px; }

.props { width: 209px; flex: none; }
.props .tab { padding: 0 7px; }
.kind { height: 64px; flex: none; display: flex; align-items: flex-start; padding: 10px 0 0 29px; gap: 28px; }
.kind svg { margin-top: 14px; }
h2 { height: 19px; flex: none; display: flex; align-items: center; gap: 8px; padding-left: 5px; border: 1px solid #181818; border-width: 1px 0; background: linear-gradient(#545454, #434343); }
.pair { height: 32px; flex: none; display: grid; grid-template-columns: 14px 50px 58px 60px 60px; align-items: center; padding: 2px 0 0 5px; border-bottom: 1px solid #2a2a2a; white-space: nowrap; }
.pair label { text-align: right; padding-right: 1px; }
.pair a { margin-left: 6px; justify-self: start; }
.pair.size { height: 36px; padding-top: 0; border: 0; }
.fillrow { height: 37px; flex: none; display: flex; align-items: center; padding-left: 52px; }
.none { width: 30px; height: 15px; flex: none; margin: 0 63px 0 15px; border: 1px solid #222; background: linear-gradient(to top right, transparent 48%, #b04a50 48% 52%, transparent 52%), #a5a0a0; }
.fillrow .blue { margin-left: 11px; flex: none; }
.rest { height: 276px; flex: none; display: flex; flex-direction: column; justify-content: space-between; padding: 41px 0 60px 203px; }
.sliver { width: 6px; height: 17px; border: 1px solid #222; background: #555; }
.lib .tab { padding: 0 12px 0 7px; }
.libselect { padding: 5px 0 4px 4px; flex: none; border-bottom: 1px solid #2a2a2a; }
.libselect button { display: block; width: 220px; height: 17px; border: 1px solid #1c1c1c; background: linear-gradient(#505050, #404040); text-align: left; padding-left: 7px; white-space: nowrap; line-height: 15px; }
.libpreview { height: 138px; flex: none; border-bottom: 1px solid #555; }
.libsearch { height: 24px; flex: none; display: flex; align-items: center; justify-content: space-between; padding-left: 4px; font-size: 11px; }
.libsearch label { width: 43px; height: 18px; border: 1px solid #111; background: #a0a0a0; display: flex; align-items: center; padding-left: 1px; }
.libsearch input { width: 20px; }
.libhead { height: 19px; flex: none; border: 1px solid #111; background: linear-gradient(#545454, #434343); padding-left: 5px; line-height: 17px; }
.liblist { flex: 1; border-left: 1px solid #111; }
.libfoot { height: 13px; flex: none; display: flex; gap: 7px; align-items: center; padding-left: 1px; }
.libfoot svg { width: 11px; height: 11px; }
.libfoot .hbar { flex: 1; }
.libfoot .thumb { width: 105px; }

.popup { position: absolute; right: 6px; top: 287px; width: 345px; height: 241px; padding: 3px 4px 4px 3px; background: #434343; border: 1px solid #141414; }
.popup-head { height: 19px; display: flex; align-items: center; }
.popup-head .chip { width: 39px; height: 19px; margin-right: 7px; }
.popup-head label { margin-left: auto; margin-right: 2px; }
.alphabox { width: 33px; height: 19px; border: 1px solid #e0983c; background: #aaa; padding: 2px 0 2px 3px; display: flex; }
.alphabox input { width: 20px; height: 13px; background: #3a96e0; color: #fff; font-size: 11px; }
.nocolor { width: 11px; height: 11px; margin: 0 10px 0 8px; background: linear-gradient(to top right, transparent 42%, #8a4a4a 42% 58%, transparent 58%), #6a6464; }
.wheel { width: 13px; height: 13px; margin-right: 3px; border-radius: 50%; background: radial-gradient(#888 20%, transparent), conic-gradient(#a84a60, #8a5aa0, #4a60a0, #3e8a80, #4a9a50, #9a8040, #a84a60); }
.popup-body { margin-top: 3px; border: 1px solid #141414; height: 212px; }
.set-name { display: flex; align-items: center; height: 22px; padding-left: 4px; }
.set-name svg { margin: 0 7px 0 10px; }
.set-body { display: flex; justify-content: space-between; padding: 0 1px 0 19px; }
.set-body > svg { margin-top: 4px; }
.swatches { display: grid; grid-template-columns: repeat(21, 14px); grid-auto-rows: 14px; background: #000; }
.swatches button { border: 1px solid #000; border-width: 0 1px 1px 0; }
.gradients { display: flex; width: 98px; border-bottom: 1px solid #000; }
.gradients i { width: 14px; height: 14px; background: linear-gradient(90deg, #fff, #000); }
.gradients i:nth-child(2) { background: radial-gradient(#fff, #000 80%); }
.gradients i:nth-child(3) { background: radial-gradient(#e00, #000 80%); }
.gradients i:nth-child(4) { background: radial-gradient(#0c0, #000 80%); }
.gradients i:nth-child(5) { background: radial-gradient(#00c, #000 80%); }
.gradients i:nth-child(6) { background: linear-gradient(90deg, #3a7ad8, #fff 45%, #b88820 60%, #ffd860); }
.gradients i:nth-child(7) { background: linear-gradient(90deg, #e02020, #ff0 25%, #0e4 45%, #0cf 60%, #22f 80%, #c0c); }
.cursor { position: absolute; left: 273px; top: 19px; }
.floor { height: 24px; flex: none; }
```
FILE: app.js
```js
// Frame ruler: a label every five frames, a second mark every 24 frames.
const numbers = document.getElementById('numbers');
[1, ...Array.from({ length: 23 }, (_, i) => (i + 1) * 5)].forEach(n => {
  const s = document.createElement('span');
  s.textContent = n;
  numbers.append(s);
});
const seconds = document.getElementById('seconds');
for (let n = 1; n <= 4; n++) {
  const s = document.createElement('span');
  s.textContent = n + 's';
  seconds.append(s);
}

// Web-safe palette: a grey/primary column, then six 6x6 blocks of the cube.
const steps = ['00', '33', '66', '99', 'CC', 'FF'];
const basics = ['000000', '333333', '666666', '999999', 'CCCCCC', 'FFFFFF',
  'FF0000', '00FF00', '0000FF', 'FFFF00', '00FFFF', 'FF00FF'];
const swatches = document.getElementById('swatches');
for (let row = 0; row < 12; row++) {
  for (let col = 0; col < 21; col++) {
    let color = '000000';
    if (col === 1) color = basics[row];
    if (col > 2) {
      const k = col - 3;
      color = steps[Math.floor(k / 6) + (row > 5 ? 3 : 0)] + steps[k % 6] + steps[row % 6];
    }
    const b = document.createElement('button');
    b.style.background = '#' + color;
    b.setAttribute('aria-label', '#' + color);
    swatches.append(b);
  }
}
```
